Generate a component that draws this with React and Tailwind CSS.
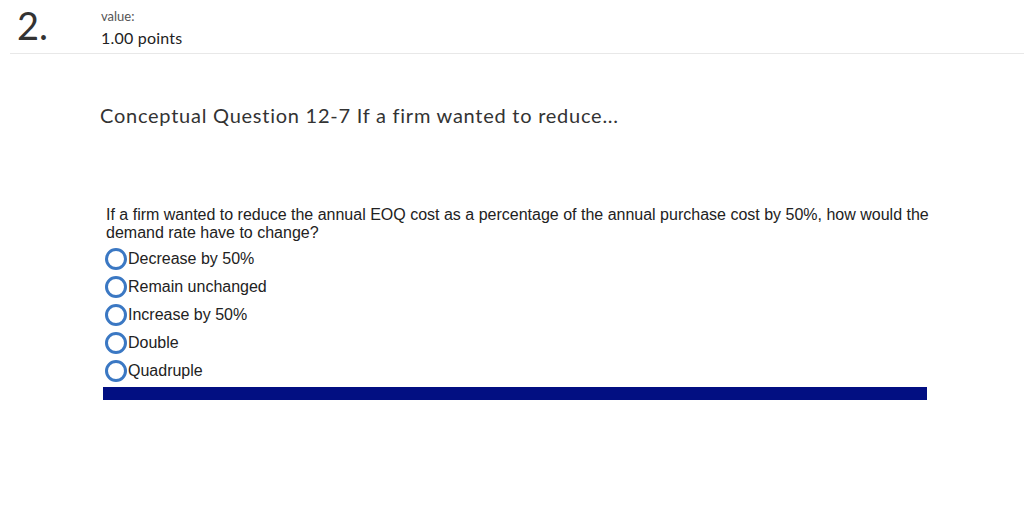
export default function App() {
  const options = ["Decrease by 50%", "Remain unchanged", "Increase by 50%", "Double", "Quadruple"];

  return (
    <div className="h-[506px] w-[1024px] bg-white text-[#333]" style={{ fontFamily: "Lato, 'Open Sans', sans-serif" }}>
      <div className="ml-[10px] flex h-[54px] border-b border-[#e8e8e8]">
        <div className="w-[91px] pl-[7px] pt-[3px] text-[38px] leading-[44px] text-[#333]">2.</div>
        <div className="pt-[9px]">
          <div className="text-[13px] leading-[15px] text-[#555]">value:</div>
          <div className="mt-[4px] text-[16px] leading-[20px] tracking-[0.2px] text-[#222]">1.00 points</div>
        </div>
      </div>

      <div className="ml-[100px] mt-[48px] text-[20px] leading-[26px] tracking-[0.75px] text-[#333]">
        Conceptual Question 12-7 If a firm wanted to reduce...
      </div>

      <div className="ml-[103px] mr-[97px] mt-[78px]" style={{ fontFamily: "'Liberation Sans', Arial, sans-serif" }}>
        <p className="mr-[-12px] pl-[3px] text-[16px] leading-[18px] text-[#222]">
          If a firm wanted to reduce the annual EOQ cost as a percentage of the annual purchase cost by 50%, how would the demand rate have to change?
        </p>
        <div className="mt-[3px] flex flex-col">
          {options.map((o) => (
            <label key={o} className="flex h-[28px] items-center text-[16px] text-[#222]">
              <span className="ml-[2px] mr-[1px] inline-block size-[22px] rounded-full border-[3px] border-[#3b78c3] bg-white" />
              {o}
            </label>
          ))}
        </div>
        <div className="mt-[2px] h-[13px] bg-[#020f82]" />
      </div>
    </div>
  );
}
